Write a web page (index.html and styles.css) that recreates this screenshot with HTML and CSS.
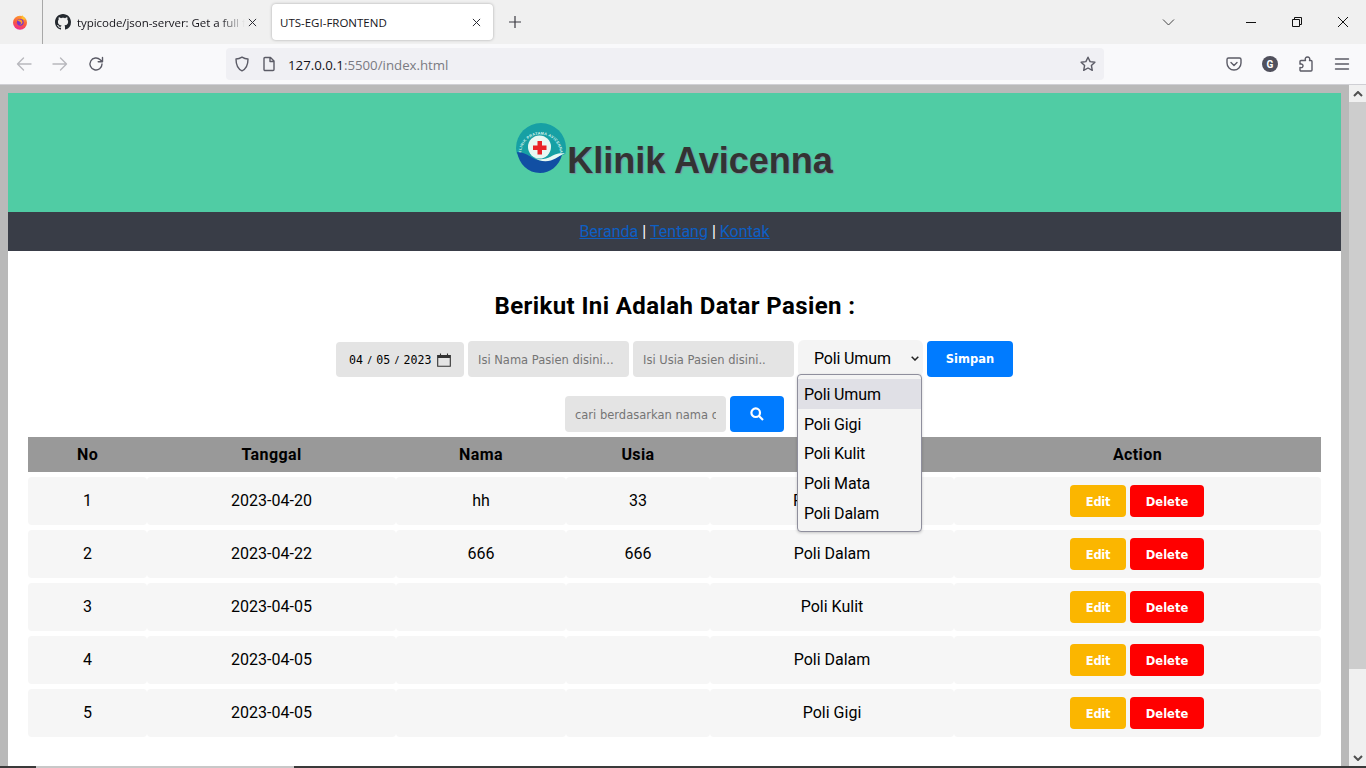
FILE: index.html
```html
<!DOCTYPE html>
<html lang="id">
<head>
<meta charset="utf-8">
<title>UTS-EGI-FRONTEND</title>
<link rel="stylesheet" href="styles.css">
</head>
<body>
<div class="tabbar">
  <div class="fxslot">
    <svg class="ic16" viewBox="0 0 16 16"><defs><linearGradient id="fx" x1="0.7" y1="0" x2="0.4" y2="1"><stop offset="0" stop-color="#ffa52e"/><stop offset=".55" stop-color="#fa5a3c"/><stop offset="1" stop-color="#ee2a92"/></linearGradient></defs><circle cx="8" cy="8.800" r="7" fill="url(#fx)"/><path d="M10 0.500c.3 2 2.500 2.400 3.800 5.500L9.500 5z" fill="#ffc02e"/><circle cx="8.300" cy="8.300" r="3.400" fill="#7a35c8"/><path d="M5.500 6.200c1.600-1.300 4.500-.9 5 1.600.3 1.900-1.500 3-3 2.500 1.300-.2 1.800-1.200 1.400-1.900-.5-.9-2.200-1.100-3.400-2.200z" fill="#ff9a2a"/></svg>
  </div>
  <div class="tab">
    <svg class="ic16" viewBox="0 0 16 16"><path fill="#24292f" d="M8 0C3.580 0 0 3.580 0 8c0 3.540 2.290 6.530 5.470 7.590.4.070.55-.17.55-.38 0-.19-.01-.82-.01-1.490-2.010.37-2.530-.49-2.690-.94-.09-.23-.48-.94-.82-1.130-.28-.15-.68-.52-.01-.53.63-.01 1.080.58 1.230.82.72 1.210 1.870.87 2.330.66.07-.52.28-.87.51-1.070-1.780-.2-3.640-.89-3.640-3.950 0-.87.31-1.590.82-2.150-.08-.2-.36-1.020.08-2.120 0 0 .67-.21 2.200.82.64-.18 1.320-.27 2-.27.68 0 1.360.09 2 .27 1.530-1.040 2.200-.82 2.200-.82.44 1.100.16 1.920.08 2.120.51.56.82 1.270.82 2.150 0 3.070-1.870 3.750-3.650 3.950.29.25.54.73.54 1.480 0 1.070-.01 1.930-.01 2.200 0 .21.15.46.55.38A8.013 8.013 0 0016 8c0-4.420-3.580-8-8-8z"/></svg>
    <span class="tabtext fade">typicode/json-server: Get a full fake REST API</span>
    <svg class="x" viewBox="0 0 10 10"><path d="M1 1l8 8M9 1l-8 8"/></svg>
  </div>
  <div class="tab active">
    <span class="tabtext">UTS-EGI-FRONTEND</span>
    <svg class="x" viewBox="0 0 10 10"><path d="M1 1l8 8M9 1l-8 8"/></svg>
  </div>
  <svg class="plus" viewBox="0 0 12 12"><path d="M6 0v12M0 6h12"/></svg>
  <div class="winctl">
    <svg class="chev" viewBox="0 0 12 7"><path d="M.5.5L6 6l5.500-5.500"/></svg>
    <svg class="wmin" viewBox="0 0 10 1"><path d="M0 .5h10"/></svg>
    <svg class="wmax" viewBox="0 0 10 10"><path d="M.5 2.500h7v7h-7zM2.500 2.500V.5h7v7h-2"/></svg>
    <svg class="wclose" viewBox="0 0 10 10"><path d="M0 0l10 10M10 0L0 10"/></svg>
  </div>
</div>

<div class="toolbar">
  <svg class="tbi faint first" viewBox="0 0 16 16"><path d="M15 8H1.500M7.500 2L1.500 8l6 6"/></svg>
  <svg class="tbi faint" viewBox="0 0 16 16"><path d="M1 8h13.500M8.500 2l6 6-6 6"/></svg>
  <svg class="tbi" viewBox="0 0 16 16"><path d="M14 8a6 6 0 1 1-1.800-4.300L14 5.500M14.500 1.500v4.300h-4.300"/></svg>
  <div class="urlbar">
    <svg class="tbi" viewBox="0 0 16 16"><path d="M8 1.200c2 1.300 4 1.800 6 1.800 0 6-1.500 9.800-6 11.800C3.500 12.800 2 9 2 3c2 0 4-.5 6-1.800z"/></svg>
    <svg class="tbi page" viewBox="0 0 16 16"><path d="M3 2.500a1 1 0 0 1 1-1h5.500L13 5v8.500a1 1 0 0 1-1 1H4a1 1 0 0 1-1-1zM9 1.500V5.500h4"/></svg>
    <span class="url"><b>127.0.0.1</b>:5500/index.html</span>
    <svg class="tbi star" viewBox="0 0 16 16"><path d="M8 1.200l2.100 4.400 4.800.6-3.500 3.300.9 4.800L8 12l-4.300 2.300.9-4.800L1.100 6.200l4.800-.6z"/></svg>
  </div>
  <div class="tbright">
    <svg class="tbi" viewBox="0 0 16 16"><path d="M2.500 2h11A1.500 1.500 0 0 1 15 3.500V7a7 7 0 0 1-14 0V3.500A1.500 1.500 0 0 1 2.500 2zM5 6.500l3 3 3-3"/></svg>
    <div class="gbadge">G</div>
    <svg class="tbi" viewBox="0 0 16 16"><path d="M3 4.500h4.500c-1-2.500.5-3.500 2-3.500s3 1 2 3.500h1.500a1 1 0 0 1 1 1V14a1 1 0 0 1-1 1H3a1 1 0 0 1-1-1v-2.500c2.500.5 3-.8 3-1.700s-.5-2.200-3-1.700V5.500a1 1 0 0 1 1-1z"/></svg>
    <svg class="tbi" viewBox="0 0 16 16"><path d="M1.500 3h13M1.500 8h13M1.500 13h13"/></svg>
  </div>
</div>

<div class="viewport">
  <div class="pagewrap">
    <div class="page-panel">
      <header class="hero">
        <svg class="logo" viewBox="0 0 50 50">
          <defs><path id="arc" d="M5 31A19.500 19.500 0 1 1 44 31"/></defs>
          <path d="M0 25a25 25 0 0 1 50 0c0 2-.3 4-.7 6L25 40 1 31c-.6-2-1-4-1-6z" fill="#17a0a4"/>
          <text class="logotext"><textPath href="#arc" startOffset="50%" text-anchor="middle">KLINIK PRATAMA AVICENNA</textPath></text>
          <circle cx="23.500" cy="24" r="11.500" fill="#e9f8f3"/>
          <path d="M21.500 18h4.500v4.500h4.500V27H26v4.500h-4.500V27H17v-4.500h4.500z" fill="#ea2327"/>
          <path d="M1 29c7 .5 11 3 15 5.500 3 1.800 6 3 9 3 8 0 14-3 21-5.500C43 43 34 50 24 50 12 50 3 41 1 29z" fill="#114fa3"/>
          <path d="M17 34c5 3 9 2.500 13 1.500 3-.8 6-2.800 9-4 3-1 6-1.500 10-1-3 .5-6 3-9.500 5-6 3.500-15 4-22.500-1.500z" fill="#e9f8f3"/>
        </svg>
        <h1 class="brand">Klinik Avicenna</h1>
      </header>
      <nav class="mainnav"><a href="#">Beranda</a> | <a href="#">Tentang</a> | <a href="#">Kontak</a></nav>
      <main class="content">
        <h2 class="title">Berikut Ini Adalah Datar Pasien :</h2>
        <form class="formrow">
          <div class="field datefield"><span>04</span><i>/</i><span>05</span><i>/</i><span>2023</span>
            <svg class="cal" viewBox="0 0 14 14"><path class="calbody" d="M.7 2.500h12.600v10.800H.7z"/><path class="calhead" d="M.7 2h12.600v3H.7z"/><path class="calbody" d="M3.500.5v2M10.500.5v2"/></svg>
          </div>
          <input class="field textfield" placeholder="Isi Nama Pasien disini...">
          <input class="field textfield" placeholder="Isi Usia Pasien disini..">
          <select class="polisel"><option>Poli Umum</option><option>Poli Gigi</option><option>Poli Kulit</option><option>Poli Mata</option><option>Poli Dalam</option></select>
          <button class="btn primary save" type="button">Simpan</button>
          <ul class="dropdown">
            <li class="on">Poli Umum</li><li>Poli Gigi</li><li>Poli Kulit</li><li>Poli Mata</li><li>Poli Dalam</li>
          </ul>
        </form>
        <div class="searchrow">
          <input class="field textfield" placeholder="cari berdasarkan nama dokter">
          <button class="btn primary searchbtn" type="button" aria-label="Cari"><svg viewBox="0 0 14 14"><circle cx="5.700" cy="5.700" r="4.300"/><path d="M9 9l4 4"/></svg></button>
        </div>
        <table class="grid">
          <thead><tr><th class="c1">No</th><th class="c2">Tanggal</th><th class="c3">Nama</th><th class="c4">Usia</th><th class="c5">Poli</th><th class="c6">Action</th></tr></thead>
          <tbody>
            <tr><td>1</td><td>2023-04-20</td><td>hh</td><td>33</td><td>Poli Umum</td><td class="acts"><button class="btn edit" type="button">Edit</button><button class="btn del" type="button">Delete</button></td></tr>
            <tr><td>2</td><td>2023-04-22</td><td>666</td><td>666</td><td>Poli Dalam</td><td class="acts"><button class="btn edit" type="button">Edit</button><button class="btn del" type="button">Delete</button></td></tr>
            <tr><td>3</td><td>2023-04-05</td><td></td><td></td><td>Poli Kulit</td><td class="acts"><button class="btn edit" type="button">Edit</button><button class="btn del" type="button">Delete</button></td></tr>
            <tr><td>4</td><td>2023-04-05</td><td></td><td></td><td>Poli Dalam</td><td class="acts"><button class="btn edit" type="button">Edit</button><button class="btn del" type="button">Delete</button></td></tr>
            <tr><td>5</td><td>2023-04-05</td><td></td><td></td><td>Poli Gigi</td><td class="acts"><button class="btn edit" type="button">Edit</button><button class="btn del" type="button">Delete</button></td></tr>
          </tbody>
        </table>
      </main>
    </div>
  </div>
  <div class="scrollbar">
    <div class="sbbtn"><svg viewBox="0 0 10 6"><path d="M1 5l4-4 4 4"/></svg></div>
    <div class="sbthumb"></div>
    <div class="sbtrack"></div>
    <div class="sbbtn"><svg viewBox="0 0 10 6"><path d="M1 1l4 4 4-4"/></svg></div>
  </div>
</div>
<div class="taskbar"><div class="taskleft"></div><div class="taskwin"></div><div class="taskrest"></div></div>
</body>
</html>
```

FILE: styles.css
```css
* { box-sizing: border-box; }
html, body { margin: 0; height: 768px; overflow: hidden; }
body { display: flex; flex-direction: column; font-family: Roboto, sans-serif; background: #b9b9b9; }

/* browser chrome */
.tabbar { height: 44px; flex: none; display: flex; align-items: center; background: #f0f0f0; font-family: "Open Sans", sans-serif; font-size: 11.500px; color: #15141a; }
.ic16 { width: 16px; height: 16px; flex: none; }
.fxslot { width: 43px; height: 44px; display: flex; align-items: center; padding-left: 12px; border-right: 1px solid #a8a8a8; }
.tab { width: 228px; height: 36px; display: flex; align-items: center; padding-left: 12px; padding-right: 14px; }
.tab .tabtext { margin-left: 6px; flex: 1; white-space: nowrap; overflow: hidden; }
.tabtext.fade { letter-spacing: -.05px; -webkit-mask-image: linear-gradient(to right, #000 85%, transparent); mask-image: linear-gradient(to right, #000 85%, transparent); }
.x { width: 9px; height: 9px; flex: none; fill: none; stroke: #2b2a33; stroke-width: 1.100; }
.tab .x { margin-left: 3px; }
.tab.active { width: 221px; margin-left: 1px; background: #fff; border-radius: 4px; box-shadow: 0 0 3px rgba(0,0,0,.3); padding-left: 8px; padding-right: 12px; }
.tab.active .tabtext { margin-left: 0; }
.plus { width: 12px; height: 12px; margin-left: 16px; fill: none; stroke: #3b3a42; stroke-width: 1.200; }
.winctl { margin-left: auto; display: flex; align-items: center; }
.winctl svg { fill: none; stroke: #111; stroke-width: 1; flex: none; }
.chev { width: 13px; height: 7px; margin-right: 71px; stroke: #444 !important; }
.wmin { width: 10px; height: 1px; margin-right: 36px; }
.wmax { width: 10px; height: 10px; margin-right: 36px; }
.wclose { width: 10px; height: 10px; margin-right: 18px; }

.toolbar { height: 41px; flex: none; display: flex; align-items: center; background: #f9f9fb; border-bottom: 1px solid #cfcfd4; }
.tbi { width: 16px; height: 16px; flex: none; fill: none; stroke: #5b5b66; stroke-width: 1.400; stroke-linejoin: round; stroke-linecap: round; }
.tbi.faint { stroke: #b8b8bd; margin-right: 20px; }
.tbi.first { margin-left: 16px; }
.urlbar { width: 878px; height: 32px; margin-left: 122px; display: flex; align-items: center; padding: 0 8px; background: #f0f0f4; border-radius: 4px; font-family: "Open Sans", sans-serif; }
.urlbar .page { margin-left: 11px; }
.url { margin-left: 11px; padding-top: 1px; font-size: 13.250px; color: #7a7a82; }
.url b { font-weight: 400; color: #15141a; }
.urlbar .star { margin-left: auto; }
.tbright { margin-left: 122px; display: flex; align-items: center; gap: 20px; }
.gbadge { width: 16px; height: 16px; border-radius: 50%; background: #50505c; color: #fff; font-size: 10px; font-weight: 700; display: flex; align-items: center; justify-content: center; }

.viewport { flex: 1; min-height: 0; display: flex; }
.pagewrap { flex: 1; min-width: 0; padding: 8px 8px 0; background: #b9b9b9; }
.page-panel { height: 100%; background: #fff; }
.scrollbar { width: 17px; flex: none; display: flex; flex-direction: column; background: #f0f0f0; }
.sbbtn { height: 17px; flex: none; display: flex; align-items: center; justify-content: center; }
.sbbtn svg { width: 10px; height: 6px; fill: none; stroke: #505050; stroke-width: 2; }
.sbthumb { height: 567px; flex: none; background: #cdcdcd; }
.sbtrack { flex: 1; }
.taskbar { height: 2px; flex: none; display: flex; background: #3a3a3a; }
.taskleft { width: 36px; }
.taskwin { width: 258px; background: #c8c8c8; }
.taskrest { flex: 1; }

/* page */
.hero { height: 119px; display: flex; justify-content: center; padding-top: 30px; background: #50cca4; }
.logo { width: 50px; height: 50px; flex: none; }
.logotext { font-family: "Liberation Sans", sans-serif; font-size: 3.800px; font-weight: 700; fill: #d8f5ee; letter-spacing: .3px; }
.brand { margin: 17px 0 0 1px; font-family: "Liberation Sans", Arial, sans-serif; font-size: 36px; line-height: 41px; font-weight: 700; color: #333; text-shadow: 1px 1px 1px #7a8fa0; }
.mainnav { height: 39px; display: flex; align-items: center; justify-content: center; white-space: pre; background: #393d47; color: #fff; font-size: 16px; }
.mainnav a { color: #0d5fc4; }
.content { padding: 0 20px; }
.title { margin: 0; padding: 41px 0 0 1px; height: 90px; text-align: center; font-size: 24px; line-height: 28px; font-weight: 700; letter-spacing: .4px; color: #000; }
.formrow { position: relative; display: flex; justify-content: center; align-items: flex-start; gap: 4px; height: 55px; }
.field { height: 36px; border: 0; border-radius: 4px; background: #e4e4e4; font-family: "DejaVu Sans", sans-serif; font-size: 11.500px; color: #333; outline: 0; }
.field::placeholder { color: #757575; opacity: 1; }
.textfield { width: 161px; padding: 1px 10px 0; }
.datefield { width: 128px; height: 35px; margin-top: 1px; display: flex; align-items: center; padding-left: 13px; font-family: "DejaVu Sans Mono", monospace; font-size: 11.600px; color: #000; }
.datefield i { font-style: normal; margin: 0 4.500px; font-family: "Open Sans", sans-serif; }
.cal { width: 14px; height: 14px; margin-left: 6px; fill: none; stroke: #333; stroke-width: 1.100; }
.calhead { fill: #333; stroke: none; }
.polisel { width: 125px; height: 37px; margin-top: -1px; -webkit-appearance: none; appearance: none; border: 0; border-radius: 6px; padding: 0 0 0 16px; font-family: Roboto, sans-serif; font-size: 16px; letter-spacing: -.15px; color: #000; outline: 0; background: #f4f4f4 url("data:image/svg+xml,%3Csvg xmlns='http://www.w3.org/2000/svg' width='8' height='5'%3E%3Cpath d='M.7.7L4 4 7.300.7' fill='none' stroke='%23222' stroke-width='1.500'/%3E%3C/svg%3E") no-repeat right 4px center; }
.btn { border: 0; border-radius: 4px; color: #fff; font-family: "DejaVu Sans", sans-serif; font-weight: 700; font-size: 11.500px; padding: 0; }
.primary { background: #007bff; }
.save { width: 86px; height: 36px; }
.dropdown { position: absolute; left: 769px; top: 33px; width: 125px; height: 158px; margin: 0; padding: 4px 0 0; list-style: none; background: #f4f4f4; border: 1px solid #8f8f9d; border-radius: 4px; box-shadow: 0 1px 3px rgba(0,0,0,.2); font-size: 16px; letter-spacing: -.15px; color: #000; z-index: 5; }
.dropdown li { height: 29.700px; line-height: 32px; padding-left: 6px; }
.dropdown li.on { background: #e0e0e6; }
.searchrow { display: flex; justify-content: center; gap: 4px; height: 36px; }
.searchbtn { width: 54px; display: flex; align-items: center; justify-content: center; }
.searchbtn svg { width: 14px; height: 14px; fill: none; stroke: #fff; stroke-width: 2.200; }
.grid { width: 1293px; table-layout: fixed; border-collapse: separate; border-spacing: 0 5px; color: #000; font-size: 16px; }
.grid th { height: 35px; padding: 0; background: #999; font-weight: 700; letter-spacing: .4px; }
.c1 { width: 119px; } .c2 { width: 249px; } .c3 { width: 170px; } .c4 { width: 144px; } .c5 { width: 244px; } .c6 { width: 367px; }
.grid td { height: 48px; padding: 0 0 2px; text-align: center; background: #f6f6f6; border-radius: 4px; }
.grid td.acts { padding: 0 1px 0 0; }
.edit, .del { height: 32px; padding-top: 2px; vertical-align: middle; }
.edit { width: 56px; background: #fbb600; letter-spacing: -.3px; }
.del { width: 74px; margin-left: 4px; background: #ff0000; }
```
